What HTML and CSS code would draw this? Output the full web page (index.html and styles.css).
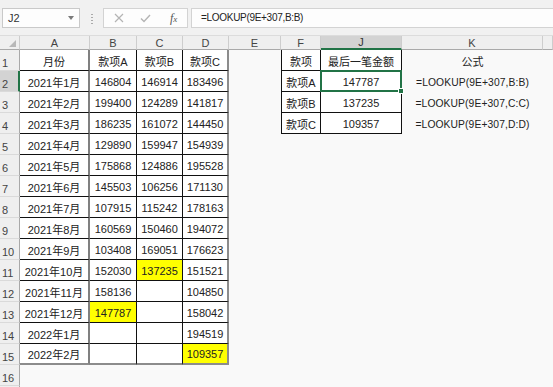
FILE: index.html
```html
<!DOCTYPE html>
<html lang="zh-CN">
<head>
  <meta charset="UTF-8" />
  <meta name="viewport" content="width=device-width, initial-scale=1.0"/>
  <title>LOOKUP 最后一笔金额</title>
  <link rel="stylesheet" href="styles.css">
</head>
<body>
  <div class="toolbar">
    <div class="namebox">
      <span>J2</span>
      <span class="caret"></span>
    </div>
    <div class="grip"></div>
    <div class="fbtns">
      <svg class="ico" width="10" height="10" viewBox="0 0 10 10"><path d="M1 1 L9 9 M9 1 L1 9" stroke="#b4b4b4" stroke-width="1.2" fill="none"/></svg>
      <svg class="ico" width="11" height="9" viewBox="0 0 11 9"><path d="M1 4.5 L4 7.5 L10 1" stroke="#b4b4b4" stroke-width="1.4" fill="none"/></svg>
      <span class="fx">f<small>x</small></span>
    </div>
    <div class="formula">=LOOKUP(9E+307,B:B)</div>
  </div>

  <div class="sheet">
    <div class="hd corner"><span class="tri"></span></div>
    <div class="hd">A</div>
    <div class="hd">B</div>
    <div class="hd">C</div>
    <div class="hd">D</div>
    <div class="hd">E</div>
    <div class="hd">F</div>
    <div class="hd sel">J</div>
    <div class="hd">K</div>
    <div class="hd"></div>

    <div class="rh">1</div>
    <div class="c t ta">月份</div>
    <div class="c t">款项A</div>
    <div class="c t">款项B</div>
    <div class="c t td">款项C</div>
    <div class="c"></div>
    <div class="c t fl">款项</div>
    <div class="c t">最后一笔金额</div>
    <div class="c">公式</div>
    <div class="c"></div>

    <div class="rh sel">2</div>
    <div class="c t ta">2021年1月</div>
    <div class="c t">146804</div>
    <div class="c t">146914</div>
    <div class="c t td">183496</div>
    <div class="c"></div>
    <div class="c t fl">款项A</div>
    <div class="c t active">147787</div>
    <div class="c f">=LOOKUP(9E+307,B:B)</div>
    <div class="c"></div>

    <div class="rh">3</div>
    <div class="c t ta">2021年2月</div>
    <div class="c t">199400</div>
    <div class="c t">124289</div>
    <div class="c t td">141817</div>
    <div class="c"></div>
    <div class="c t fl">款项B</div>
    <div class="c t">137235</div>
    <div class="c f">=LOOKUP(9E+307,C:C)</div>
    <div class="c"></div>

    <div class="rh">4</div>
    <div class="c t ta">2021年3月</div>
    <div class="c t">186235</div>
    <div class="c t">161072</div>
    <div class="c t td">144450</div>
    <div class="c"></div>
    <div class="c t fl">款项C</div>
    <div class="c t">109357</div>
    <div class="c f">=LOOKUP(9E+307,D:D)</div>
    <div class="c"></div>

    <div class="rh">5</div>
    <div class="c t ta">2021年4月</div>
    <div class="c t">129890</div>
    <div class="c t">159947</div>
    <div class="c t td">154939</div>
    <div class="c"></div><div class="c"></div><div class="c"></div><div class="c"></div><div class="c"></div>

    <div class="rh">6</div>
    <div class="c t ta">2021年5月</div>
    <div class="c t">175868</div>
    <div class="c t">124886</div>
    <div class="c t td">195528</div>
    <div class="c"></div><div class="c"></div><div class="c"></div><div class="c"></div><div class="c"></div>

    <div class="rh">7</div>
    <div class="c t ta">2021年6月</div>
    <div class="c t">145503</div>
    <div class="c t">106256</div>
    <div class="c t td">171130</div>
    <div class="c"></div><div class="c"></div><div class="c"></div><div class="c"></div><div class="c"></div>

    <div class="rh">8</div>
    <div class="c t ta">2021年7月</div>
    <div class="c t">107915</div>
    <div class="c t">115242</div>
    <div class="c t td">178163</div>
    <div class="c"></div><div class="c"></div><div class="c"></div><div class="c"></div><div class="c"></div>

    <div class="rh">9</div>
    <div class="c t ta">2021年8月</div>
    <div class="c t">160569</div>
    <div class="c t">150460</div>
    <div class="c t td">194072</div>
    <div class="c"></div><div class="c"></div><div class="c"></div><div class="c"></div><div class="c"></div>

    <div class="rh">10</div>
    <div class="c t ta">2021年9月</div>
    <div class="c t">103408</div>
    <div class="c t">169051</div>
    <div class="c t td">176623</div>
    <div class="c"></div><div class="c"></div><div class="c"></div><div class="c"></div><div class="c"></div>

    <div class="rh">11</div>
    <div class="c t ta">2021年10月</div>
    <div class="c t">152030</div>
    <div class="c t y">137235</div>
    <div class="c t td">151521</div>
    <div class="c"></div><div class="c"></div><div class="c"></div><div class="c"></div><div class="c"></div>

    <div class="rh">12</div>
    <div class="c t ta">2021年11月</div>
    <div class="c t">158136</div>
    <div class="c t"></div>
    <div class="c t td">104850</div>
    <div class="c"></div><div class="c"></div><div class="c"></div><div class="c"></div><div class="c"></div>

    <div class="rh">13</div>
    <div class="c t ta">2021年12月</div>
    <div class="c t y">147787</div>
    <div class="c t"></div>
    <div class="c t td">158042</div>
    <div class="c"></div><div class="c"></div><div class="c"></div><div class="c"></div><div class="c"></div>

    <div class="rh">14</div>
    <div class="c t ta">2022年1月</div>
    <div class="c t"></div>
    <div class="c t"></div>
    <div class="c t td">194519</div>
    <div class="c"></div><div class="c"></div><div class="c"></div><div class="c"></div><div class="c"></div>

    <div class="rh">15</div>
    <div class="c t ta bt">2022年2月</div>
    <div class="c t bt"></div>
    <div class="c t bt"></div>
    <div class="c t td bt y">109357</div>
    <div class="c"></div><div class="c"></div><div class="c"></div><div class="c"></div><div class="c"></div>

    <div class="rh">16</div>
    <div class="c"></div><div class="c"></div><div class="c"></div><div class="c"></div><div class="c"></div>
    <div class="c"></div><div class="c"></div><div class="c"></div><div class="c"></div>

    <div class="rh">17</div>
    <div class="c"></div><div class="c"></div><div class="c"></div><div class="c"></div><div class="c"></div>
    <div class="c"></div><div class="c"></div><div class="c"></div><div class="c"></div>
  </div>
</body>
</html>
```

FILE: styles.css
```css
html, body {
  height: 100%;
}
body {
  margin: 0;
  background: #f9f9f9;
  font-family: "Liberation Sans", "Noto Sans CJK SC", sans-serif;
  color: #222;
  overflow: hidden;
}

/* formula bar */
.toolbar {
  height: 36px;
  background: #f1f1f1;
  display: flex;
  align-items: flex-start;
  padding-top: 8px;
  box-sizing: border-box;
  border-bottom: 1px solid #dcdcdc;
}
.namebox {
  margin-left: 2px;
  width: 78px;
  height: 20px;
  box-sizing: border-box;
  background: #fdfdfd;
  border: 1px solid #c9c9c9;
  display: flex;
  align-items: center;
  justify-content: space-between;
  padding: 0 5px 0 5px;
  font-size: 11px;
  color: #333;
}
.caret {
  width: 0;
  height: 0;
  border-left: 3px solid transparent;
  border-right: 3px solid transparent;
  border-top: 4px solid #7a7a7a;
}
.grip {
  width: 2px;
  height: 10px;
  margin: 6px 10px 0 11px;
  background: repeating-linear-gradient(#aaa 0 1px, transparent 1px 3px);
}
.fbtns {
  width: 85px;
  height: 20px;
  box-sizing: border-box;
  background: #fdfdfd;
  border: 1px solid #d3d3d3;
  display: flex;
  align-items: center;
  padding-left: 10px;
  gap: 16px;
}
.fx {
  font-family: "Liberation Serif", serif;
  font-style: italic;
  font-size: 12px;
  color: #555;
  margin-left: 3px;
}
.fx small {
  font-size: 9px;
}
.formula {
  flex: 1;
  margin-left: 3px;
  height: 20px;
  box-sizing: border-box;
  background: #fdfdfd;
  border: 1px solid #d3d3d3;
  border-right: none;
  font-size: 10px;
  letter-spacing: -0.3px;
  line-height: 18px;
  padding-left: 9px;
  color: #222;
}

/* grid */
.sheet {
  display: grid;
  grid-template-columns: 20px 70px 47px 46px 46px 52px 40px 81px 141px 1fr;
  grid-template-rows: 14px repeat(16, 21px) 20px;
  height: calc(100% - 36px);
  overflow: hidden;
}
.hd {
  background: #efefef;
  border-right: 1px solid #cdcdcd;
  border-bottom: 1px solid #a9a9a9;
  box-sizing: border-box;
  font-size: 11px;
  color: #444;
  display: flex;
  align-items: center;
  justify-content: center;
}
.hd.sel {
  background: #d3d3d3;
  border-bottom: 2px solid #217346;
  color: #333;
}
.corner {
  position: relative;
}
.tri {
  position: absolute;
  right: 3px;
  bottom: 2px;
  width: 0;
  height: 0;
  border-left: 7px solid transparent;
  border-bottom: 7px solid #b8b8b8;
}
.rh {
  background: #efefef;
  border-right: 1px solid #a9a9a9;
  border-bottom: 1px solid #dadada;
  box-sizing: border-box;
  font-size: 11px;
  color: #444;
  display: flex;
  align-items: flex-end;
  padding: 0 0 1px 2px;
}
.rh.sel {
  background: #d3d3d3;
  border-right: 2px solid #217346;
}
.c {
  box-sizing: border-box;
  font-size: 11px;
  color: #222;
  display: flex;
  align-items: center;
  justify-content: center;
  padding-top: 1px;
  white-space: nowrap;
}
.c.f {
  font-size: 10.3px;
  letter-spacing: 0.1px;
}
.t {
  background: #fff;
  border-right: 1px solid #111;
  border-bottom: 1px solid #111;
}
.ta {
  border-right: 2px solid #808080;
}
.td {
  border-right: 2px solid #8c8c8c;
}
.bt {
  border-bottom: 2px solid #8c8c8c;
}
.fl {
  border-left: 1px solid #111;
}
.y {
  background: #ffff00;
}
.active {
  position: relative;
}
.active::after {
  content: "";
  position: absolute;
  left: -1px;
  top: -1px;
  right: -1px;
  bottom: -1px;
  border: 2px solid #217346;
}
.active::before {
  content: "";
  position: absolute;
  right: -3px;
  bottom: -3px;
  width: 4px;
  height: 4px;
  background: #217346;
  border: 1px solid #fff;
  z-index: 1;
}
```
